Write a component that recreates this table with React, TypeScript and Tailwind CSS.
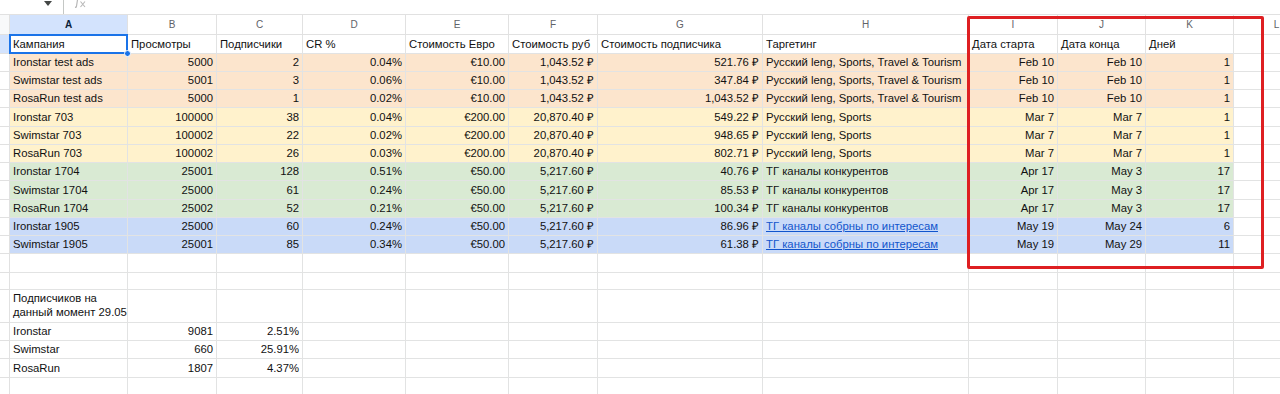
import React from "react";

type Row = {
  h: string;
  fill?: string;
  cells: (string | { text: string; link?: boolean; wrap?: boolean })[];
};

// column letters + alignment of the data cells (l = left, r = right)
const cols = ["A", "B", "C", "D", "E", "F", "G", "H", "I", "J", "K", "L"];
const align = ["l", "r", "r", "r", "r", "r", "r", "l", "r", "r", "r", "l"];

const orange = "bg-[#fce5cd]";
const yellow = "bg-[#fff2cc]";
const green = "bg-[#d9ead3]";
const blue = "bg-[#c9daf8]";

const travel = "Русский leng, Sports, Travel & Tourism";
const sports = "Русский leng, Sports";
const tg = "ТГ каналы конкурентов";
const tgLink = { text: "ТГ каналы собрны по интересам", link: true };

const rows: Row[] = [
  { h: "h-[19px]", cells: ["Кампания", "Просмотры", "Подписчики", "CR %", "Стоимость Евро", "Стоимость руб", "Стоимость подписчика", "Таргетинг", "Дата старта", "Дата конца", "Дней"] },
  { h: "h-[18px]", fill: orange, cells: ["Ironstar test ads", "5000", "2", "0.04%", "€10.00", "1,043.52 ₽", "521.76 ₽", travel, "Feb 10", "Feb 10", "1"] },
  { h: "h-[18px]", fill: orange, cells: ["Swimstar test ads", "5001", "3", "0.06%", "€10.00", "1,043.52 ₽", "347.84 ₽", travel, "Feb 10", "Feb 10", "1"] },
  { h: "h-[18px]", fill: orange, cells: ["RosaRun test ads", "5000", "1", "0.02%", "€10.00", "1,043.52 ₽", "1,043.52 ₽", travel, "Feb 10", "Feb 10", "1"] },
  { h: "h-[19px]", fill: yellow, cells: ["Ironstar 703", "100000", "38", "0.04%", "€200.00", "20,870.40 ₽", "549.22 ₽", sports, "Mar 7", "Mar 7", "1"] },
  { h: "h-[18px]", fill: yellow, cells: ["Swimstar 703", "100002", "22", "0.02%", "€200.00", "20,870.40 ₽", "948.65 ₽", sports, "Mar 7", "Mar 7", "1"] },
  { h: "h-[18px]", fill: yellow, cells: ["RosaRun 703", "100002", "26", "0.03%", "€200.00", "20,870.40 ₽", "802.71 ₽", sports, "Mar 7", "Mar 7", "1"] },
  { h: "h-[18px]", fill: green, cells: ["Ironstar 1704", "25001", "128", "0.51%", "€50.00", "5,217.60 ₽", "40.76 ₽", tg, "Apr 17", "May 3", "17"] },
  { h: "h-[19px]", fill: green, cells: ["Swimstar 1704", "25000", "61", "0.24%", "€50.00", "5,217.60 ₽", "85.53 ₽", tg, "Apr 17", "May 3", "17"] },
  { h: "h-[18px]", fill: green, cells: ["RosaRun 1704", "25002", "52", "0.21%", "€50.00", "5,217.60 ₽", "100.34 ₽", tg, "Apr 17", "May 3", "17"] },
  { h: "h-[18px]", fill: blue, cells: ["Ironstar 1905", "25000", "60", "0.24%", "€50.00", "5,217.60 ₽", "86.96 ₽", tgLink, "May 19", "May 24", "6"] },
  { h: "h-[18px]", fill: blue, cells: ["Swimstar 1905", "25001", "85", "0.34%", "€50.00", "5,217.60 ₽", "61.38 ₽", tgLink, "May 19", "May 29", "11"] },
  { h: "h-[19px]", cells: [] },
  { h: "h-[17px]", cells: [] },
  { h: "h-[33px]", cells: [{ text: "Подписчиков на данный момент 29.05", wrap: true }] },
  { h: "h-[18px]", cells: ["Ironstar", "9081", "2.51%"] },
  { h: "h-[18px]", cells: ["Swimstar", "660", "25.91%"] },
  { h: "h-[19px]", cells: ["RosaRun", "1807", "4.37%"] },
  { h: "h-[18px]", cells: [] },
];

function Toolbar() {
  return (
    <div className="flex h-[14px] items-start overflow-hidden bg-white">
      <svg width="8" height="5" viewBox="0 0 8 5" className="ml-[44px] mt-[1px]">
        <polygon points="0,0 8,0 4,5" fill="#444746" />
      </svg>
      <div className="ml-[11px] h-full w-px bg-[#c4c7c5]" />
      <svg width="12" height="8" viewBox="0 0 12 8" className="ml-[10px]">
        {/* lower half of the fx glyph */}
        <path d="M3.5 0 L2.4 6.5 Q2.1 7.6 1 7.4" stroke="#b8b8b8" strokeWidth="1.2" fill="none" />
        <path d="M6.5 1.5 L11 7 M11 1.5 L6.5 7" stroke="#b8b8b8" strokeWidth="1.1" fill="none" />
      </svg>
    </div>
  );
}

export default function App() {
  return (
    <div className="relative h-[394px] w-[1280px] overflow-hidden bg-white font-['Liberation_Sans',Arial,sans-serif] text-[11.3px] text-[#111]">
      <Toolbar />

      <div className="grid w-[1320px] grid-cols-[10px_118px_89px_86px_103px_103px_89px_165px_206px_89px_88px_88px_86px] border-t border-[#e1e1e1]">
        {/* column letters */}
        <div className="h-[20px] border-b border-r border-[#e1e1e1] bg-[#f8f9fa]" />
        {cols.map((c, i) => (
          <div
            key={c}
            className={
              i === 0
                ? "flex h-[20px] items-center justify-center border-b border-r border-[#e1e1e1] bg-[#d3e3fd] text-[10px] font-bold text-[#0b1f3a]"
                : "flex h-[20px] items-center justify-center border-b border-r border-[#e1e1e1] bg-white text-[10px] text-[#5f6368]"
            }
          >
            {c}
          </div>
        ))}

        {rows.map((r, ri) => (
          <React.Fragment key={ri}>
            <div className={`${r.h} border-b border-r border-[#e1e1e1] ${ri === 0 ? "bg-[#d3e3fd]" : "bg-white"}`} />
            {cols.map((c, ci) => {
              const raw = r.cells[ci];
              const cell = typeof raw === "string" ? { text: raw } : raw;
              const filled = r.fill && ci < 11 ? r.fill : "bg-white";
              // header row is all text, so everything sits left there
              const right = ri > 0 && align[ci] === "r";
              return (
                <div
                  key={c}
                  className={`${r.h} ${filled} relative flex items-end overflow-visible whitespace-nowrap border-b border-r border-[#e2e3e3] leading-[14px] ${cell?.wrap ? "pb-[3px] pl-[3px] pr-0" : "px-[3px] pb-[2px]"} ${right ? "justify-end" : "justify-start"}`}
                >
                  {cell && (
                    <span
                      className={
                        cell.link
                          ? "text-[#1155cc] underline"
                          : cell.wrap
                          ? "whitespace-normal"
                          : ""
                      }
                    >
                      {cell.text}
                    </span>
                  )}
                  {ri === 0 && ci === 0 && (
                    <>
                      <div className="pointer-events-none absolute -inset-px border-2 border-[#1a73e8]" />
                      <div className="absolute -bottom-[4px] -right-[4px] z-10 h-[7px] w-[7px] rounded-full border border-white bg-[#1a73e8]" />
                    </>
                  )}
                </div>
              );
            })}
          </React.Fragment>
        ))}
      </div>

      {/* red highlight around I..K */}
      <div className="pointer-events-none absolute left-[967px] top-[16px] h-[253px] w-[297px] rounded-[2px] border-[3px] border-[#de1f22]" />
    </div>
  );
}
